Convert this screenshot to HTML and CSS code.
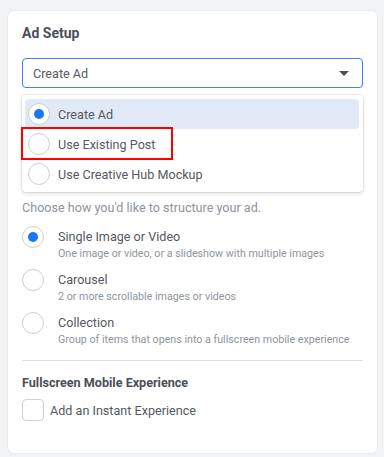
FILE: index.html
```
<!DOCTYPE html>
<html lang="en">
<head>
    <meta charset="UTF-8" />
    <title>Ad Setup</title>
    <link rel="stylesheet" href="styles.css">
</head>
<body>
    <div class="card">
        <h2 class="title">Ad Setup</h2>

        <div class="select">
            <span>Create Ad</span>
            <span class="caret"></span>
        </div>

        <div class="menu">
            <div class="menu-item active">
                <span class="radio checked"></span>
                <span>Create Ad</span>
            </div>
            <div class="menu-item">
                <span class="radio"></span>
                <span>Use Existing Post</span>
                <span class="highlight"></span>
            </div>
            <div class="menu-item">
                <span class="radio"></span>
                <span>Use Creative Hub Mockup</span>
            </div>
        </div>

        <p class="help">Choose how you'd like to structure your ad.</p>

        <div class="options">
            <div class="option">
                <span class="radio checked"></span>
                <div>
                    <div class="option-name">Single Image or Video</div>
                    <div class="option-desc">One image or video, or a slideshow with multiple images</div>
                </div>
            </div>
            <div class="option">
                <span class="radio"></span>
                <div>
                    <div class="option-name">Carousel</div>
                    <div class="option-desc">2 or more scrollable images or videos</div>
                </div>
            </div>
            <div class="option">
                <span class="radio"></span>
                <div>
                    <div class="option-name">Collection</div>
                    <div class="option-desc">Group of items that opens into a fullscreen mobile experience</div>
                </div>
            </div>
        </div>

        <hr class="divider">

        <h3 class="subtitle">Fullscreen Mobile Experience</h3>
        <label class="check-row">
            <span class="checkbox"></span>
            <span>Add an Instant Experience</span>
        </label>
    </div>
</body>
</html>
```

FILE: styles.css
```
body {
    margin: 0;
    padding: 10px 6px 5px 7px;
    background: #f2f3f5;
    color: #4b4f56;
    font-family: Roboto, "Liberation Sans", sans-serif;
}

.card {
    background: #ffffff;
    border: 1px solid #e9eaed;
    border-radius: 7px;
    padding: 13px 14px 30px;
    height: 399px;
}

.title {
    margin: 0 0 16px;
    font-size: 14px;
    line-height: 18px;
    font-weight: bold;
}

.select {
    height: 28px;
    border: 1px solid #4080ff;
    border-radius: 4px;
    padding: 0 13px 0 10px;
    display: flex;
    align-items: center;
    justify-content: space-between;
    font-size: 12.6px;
    color: #555960;
}

.caret {
    width: 0;
    height: 0;
    border-left: 5px solid transparent;
    border-right: 5px solid transparent;
    border-top: 5px solid #4b4f56;
}

.menu {
    margin-top: 7px;
    padding: 4px 4px 3px 3px;
    border-radius: 4px;
    box-shadow: 0 0 0 1px rgba(0, 0, 0, 0.06), 0 2px 4px rgba(0, 0, 0, 0.12);
}

.menu-item {
    position: relative;
    height: 30px;
    display: flex;
    align-items: center;
    gap: 8px;
    padding-left: 3px;
    font-size: 12.6px;
    color: #555960;
    border-radius: 4px;
}

.menu-item.active {
    background: #e1e9f7;
}

.highlight {
    position: absolute;
    left: -4px;
    top: -2px;
    width: 148px;
    height: 29px;
    border: 2px solid #ff0000;
}

.radio {
    width: 20px;
    height: 20px;
    flex: none;
    border: 1px solid #ccd0d5;
    border-radius: 50%;
    background: #ffffff;
    display: flex;
    align-items: center;
    justify-content: center;
}

.radio.checked::after {
    content: "";
    width: 10px;
    height: 10px;
    border-radius: 50%;
    background: #1877f2;
}

.help {
    margin: 7px 0 0;
    font-size: 12.6px;
    line-height: 18px;
    color: #90949c;
}

.options {
    margin-top: 11px;
    display: flex;
    flex-direction: column;
    gap: 9px;
}

.option {
    display: flex;
    gap: 14px;
}

.option .radio {
    margin-top: -2px;
}

.option-name {
    font-size: 12.6px;
    line-height: 18px;
    color: #555960;
}

.option-desc {
    font-size: 10.7px;
    line-height: 16px;
    color: #90949c;
}

.divider {
    margin: 12px 0 0;
    border: none;
    border-top: 1px solid #dddfe2;
}

.subtitle {
    margin: 13px 0 7px;
    font-size: 12.6px;
    line-height: 18px;
    font-weight: bold;
}

.check-row {
    display: flex;
    align-items: center;
    gap: 6px;
    font-size: 12.6px;
    color: #555960;
}

.checkbox {
    width: 20px;
    height: 20px;
    border: 1px solid #ccd0d5;
    border-radius: 4px;
}
```
